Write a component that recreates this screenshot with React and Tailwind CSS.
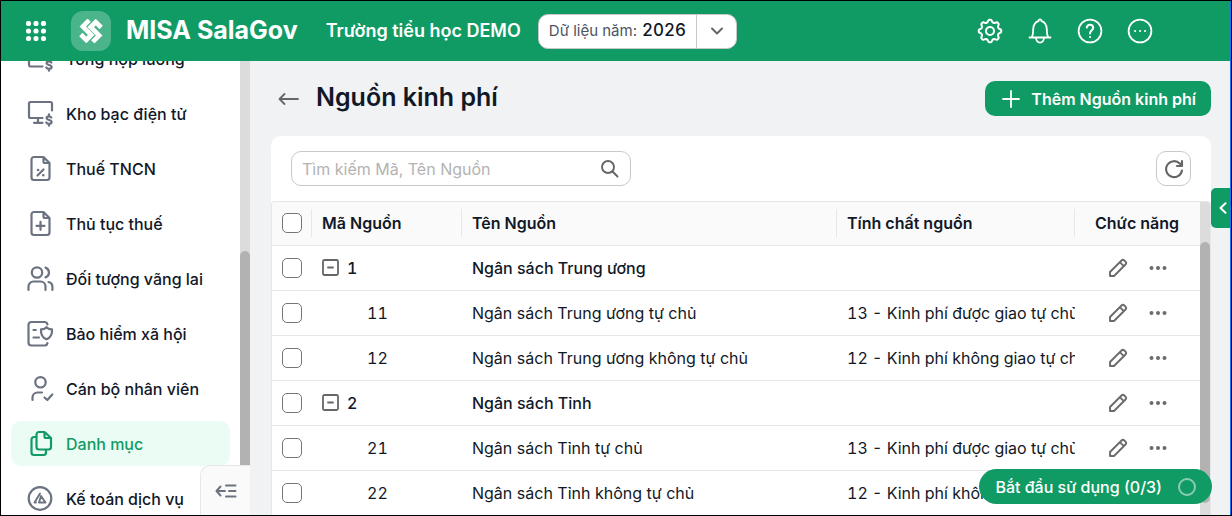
import { useState } from 'react';

const menuItems = [
  { label: 'Tổng hợp lương', icon: 'salary' },
  { label: 'Kho bạc điện tử', icon: 'monitor' },
  { label: 'Thuế TNCN', icon: 'percent' },
  { label: 'Thủ tục thuế', icon: 'plus' },
  { label: 'Đối tượng vãng lai', icon: 'users' },
  { label: 'Bảo hiểm xã hội', icon: 'insurance' },
  { label: 'Cán bộ nhân viên', icon: 'staff' },
  { label: 'Danh mục', icon: 'copy', active: true },
  { label: 'Kế toán dịch vụ', icon: 'accounting' },
];

const sources = [
  { code: '1', name: 'Ngân sách Trung ương', nature: '', parent: true },
  { code: '11', name: 'Ngân sách Trung ương tự chủ', nature: '13 - Kinh phí được giao tự chủ' },
  { code: '12', name: 'Ngân sách Trung ương không tự chủ', nature: '12 - Kinh phí không giao tự chủ' },
  { code: '2', name: 'Ngân sách Tỉnh', nature: '', parent: true },
  { code: '21', name: 'Ngân sách Tỉnh tự chủ', nature: '13 - Kinh phí được giao tự chủ' },
  { code: '22', name: 'Ngân sách Tỉnh không tự chủ', nature: '12 - Kinh phí không giao tự chủ' },
];

// 8-lobed outline of the settings gear
const gearPoints = Array.from({ length: 96 }, (_, i) => {
  const a = (i / 96) * Math.PI * 2;
  const r = 10.1 + 1.3 * Math.tanh(1.6 * Math.cos(8 * a));
  return `${(13 + r * Math.cos(a)).toFixed(2)},${(13 + r * Math.sin(a)).toFixed(2)}`;
}).join(' ');

const dollar =
  'M24.300 17.600c-.5-1-1.300-1.300-2.400-1.300-1.300 0-2.300.7-2.300 1.800 0 2.600 5 1.300 5 3.800 0 1.200-1.100 1.900-2.600 1.900-1.300 0-2.200-.4-2.700-1.400M22 14.300v2M22 23.800v1.900';

const menuPaths = {
  salary: (
    <>
      <path d="M25 10.500V5a2 2 0 0 0-2-2H4a2 2 0 0 0-2 2v14.500a2 2 0 0 0 2 2H15.500" />
      <path d={dollar} />
    </>
  ),
  monitor: (
    <>
      <path d="M25 10.500V3.500A1.500 1.500 0 0 0 23.500 2h-20A1.500 1.500 0 0 0 2 3.500v13A1.500 1.500 0 0 0 3.500 18H15.500M11 18v4M7 22.800h8.500" />
      <path d={dollar} />
    </>
  ),
  percent: (
    <>
      <path d="M16.500 2H7a2.500 2.500 0 0 0-2.500 2.500v18A2.500 2.500 0 0 0 7 25h13a2.500 2.500 0 0 0 2.500-2.500V8zM16.500 2v4.500A1.500 1.500 0 0 0 18 8h4.500M16.500 14.500l-6 6" />
      <path d="M11 15h.1M16.200 20.200h.1" strokeWidth="2.600" />
    </>
  ),
  plus: (
    <path d="M16.500 2H7a2.500 2.500 0 0 0-2.500 2.500v18A2.500 2.500 0 0 0 7 25h13a2.500 2.500 0 0 0 2.500-2.500V8zM16.500 2v4.500A1.500 1.500 0 0 0 18 8h4.500M13.500 11.800v8M9.500 15.800h8" />
  ),
  users: (
    <>
      <circle cx="10" cy="7.500" r="5.200" />
      <path d="M1.500 25v-3.500a5 5 0 0 1 5-5h7a5 5 0 0 1 5 5V25M18.500 2.600a5.200 5.200 0 0 1 0 9.800M21.500 17c2.400.6 3.900 2.400 3.900 5V25" />
    </>
  ),
  insurance: (
    <path d="M20.500 4.500A3 3 0 0 0 18 2H4.500A3 3 0 0 0 1.500 5v17.500a3 3 0 0 0 3 3H18a3 3 0 0 0 2.500-2.500M6.500 10h2.300M6.500 17.500h5.500M19.500 7.200c1.500 1.500 3.400 2.200 5.500 2.200.3 4.700-1.200 8.300-5.500 9.900-4.300-1.600-5.800-5.200-5.500-9.900 2.100 0 4-.7 5.500-2.200z" />
  ),
  staff: (
    <>
      <circle cx="13.500" cy="7.300" r="5.200" />
      <path d="M5.500 25v-2.500a5 5 0 0 1 5-5H15M17.500 22.500l2.800 2.500 5-5.500" />
    </>
  ),
  copy: (
    <>
      <path d="M17.500 2H12a2.500 2.500 0 0 0-2.500 2.500V17a2.500 2.500 0 0 0 2.500 2.500h9.500A2.500 2.500 0 0 0 24 17V8zM17.500 2v4.500A1.500 1.500 0 0 0 19 8h5" />
      <path d="M9 7H7a2.500 2.500 0 0 0-2.500 2.500v13A2.500 2.500 0 0 0 7 25h9.500a2.500 2.500 0 0 0 2.500-2.500V20" />
    </>
  ),
  accounting: (
    <>
      <circle cx="13" cy="13.500" r="11.300" />
      <path d="M7.500 17.500 13 8.500M12 17.500l2-6.500 4.500 6.500zM7.500 17.500H9" strokeWidth="1.900" />
    </>
  ),
};

const MenuIcon = ({ name }) => (
  <svg
    viewBox="0 0 27 27"
    className="size-[27px] shrink-0"
    fill="none"
    stroke="currentColor"
    strokeWidth="2.200"
    strokeLinecap="round"
    strokeLinejoin="round"
  >
    {menuPaths[name]}
  </svg>
);

const HeaderIcon = ({ label, children }) => (
  <button aria-label={label} className="text-white">
    <svg viewBox="0 0 26 26" className="size-[26px]" fill="none" stroke="currentColor" strokeWidth="1.800" strokeLinecap="round" strokeLinejoin="round">
      {children}
    </svg>
  </button>
);

const Header = () => (
  <header className="flex h-[60px] shrink-0 items-center bg-[#119b64] pl-[25px] pr-[77px] text-white">
    <button aria-label="Ứng dụng">
      <svg viewBox="0 0 20 20" className="size-5" fill="currentColor">
        {[2.5, 10, 17.5].map((y) => [2.5, 10, 17.5].map((x) => <circle key={`${x}-${y}`} cx={x} cy={y} r="2.600" />))}
      </svg>
    </button>
    <div className="ml-[25px] flex size-10 shrink-0 items-center justify-center rounded-xl bg-white/25">
      <svg viewBox="0 0 24 24" className="size-6" fill="none" stroke="white" strokeWidth="4.600">
        <path d="M10.200 1.100 3.800 7.500l8.500 8.500-5 5-5.500-5.500" />
        <path d="M13.800 22.900l6.400-6.400L11.700 8l5-5 5.500 5.500" />
      </svg>
    </div>
    <span className="ml-[15px] whitespace-nowrap text-[25px] font-bold">MISA SalaGov</span>
    <span className="ml-7 whitespace-nowrap text-lg font-semibold">Trường tiểu học DEMO</span>
    <div className="ml-[17px] flex h-[35px] shrink-0 items-center rounded-[10px] border border-[#c8c8c8] bg-white">
      <span className="flex items-center gap-[5px] whitespace-nowrap px-[10px] text-[15px] text-[#4b5563]">
        Dữ liệu năm: <b className="text-[17px] font-medium tabular-nums text-[#111827]">2026</b>
      </span>
      <button aria-label="Chọn năm" className="flex h-full w-10 items-center justify-center border-l border-[#c8c8c8] text-[#666]">
        <svg viewBox="0 0 14 8" className="h-2 w-3.5" fill="none" stroke="currentColor" strokeWidth="2" strokeLinecap="round" strokeLinejoin="round">
          <path d="M2 1.500 7 6.500l5-5" />
        </svg>
      </button>
    </div>
    <div className="ml-auto flex items-center gap-6">
      <HeaderIcon label="Thiết lập">
        <circle cx="13" cy="13" r="4" strokeWidth="2" />
        <polygon points={gearPoints} strokeWidth="2" />
      </HeaderIcon>
      <HeaderIcon label="Thông báo">
        <path d="M2.500 19.500h21M4.500 19.500c1.600-2 1.700-4.500 1.700-8.500 0-4.300 3-7.500 5.300-8 .2-1.200.8-1.700 1.500-1.700s1.300.5 1.500 1.700c2.300.5 5.300 3.700 5.300 8 0 4 .1 6.500 1.700 8.500M9 20c.3 2.800 1.800 4.600 4 4.600s3.700-1.800 4-4.600" />
      </HeaderIcon>
      <HeaderIcon label="Trợ giúp">
        <circle cx="13" cy="13" r="11.400" />
        <path d="M9.800 9.500c.3-1.800 1.500-2.700 3.200-2.700 1.900 0 3.200 1.200 3.200 2.900 0 2.500-3.200 2.700-3.200 5.800M13 19h.1" strokeWidth="2" />
      </HeaderIcon>
      <HeaderIcon label="Thêm">
        <circle cx="13" cy="13" r="11.400" />
        <path d="M8 13h.1M13 13h.1M18 13h.1" strokeWidth="2" />
      </HeaderIcon>
    </div>
  </header>
);

const Sidebar = () => (
  <aside className="relative flex w-[249px] shrink-0 overflow-hidden bg-white">
    <nav className="-mt-[25px] flex flex-1 flex-col gap-[10px] px-[10px]">
      {menuItems.map((item) => (
        <a
          key={item.label}
          href="#"
          className={`flex h-[45px] shrink-0 items-center gap-3 whitespace-nowrap rounded-[10px] pl-4 text-base font-medium ${
            item.active ? 'bg-[#ebfcf5] text-[#119b64]' : 'text-[#111827]'
          }`}
        >
          <span className={item.active ? 'text-[#119b64]' : 'text-[#6b7280]'}>
            <MenuIcon name={item.icon} />
          </span>
          {item.label}
        </a>
      ))}
    </nav>
    <div className="flex w-[10px] shrink-0 flex-col bg-[#dcdcdc] pt-[190px]">
      <div className="flex-1 rounded-t-full bg-[#b2b2b2]"></div>
    </div>
    <button aria-label="Thu gọn" className="absolute bottom-0 right-0 flex h-[50px] w-[50px] items-center justify-center rounded-tl-[10px] border-l border-t border-[#e5e7eb] bg-[#fafafa] text-[#6b7280]">
      <svg viewBox="0 0 22 16" className="h-4 w-[22px]" fill="none" stroke="currentColor" strokeWidth="2" strokeLinecap="round" strokeLinejoin="round">
        <path d="M5.500 3.500 1.500 8l4 4.500M1.500 8H10M14 8h6.500M11 2.500h9.500M11 13.500h9.500" />
      </svg>
    </button>
  </aside>
);

const Checkbox = ({ label }) => (
  <input
    type="checkbox"
    aria-label={label}
    className="block size-5 appearance-none rounded-[5px] border border-[#757575] bg-white checked:bg-[#119b64]"
  />
);

const SourceRow = ({ source, open, onToggle }) => (
  <tr className={`h-[45px] border-b border-[#e5e7eb] ${source.parent ? 'font-medium' : ''}`}>
    <td className="pl-[10px]">
      <Checkbox label={`Chọn ${source.name}`} />
    </td>
    <td className={source.parent ? 'pl-[11px]' : 'pl-14'}>
      <div className="flex items-center gap-2">
        {source.parent && (
          <button aria-label={open ? 'Thu gọn' : 'Mở rộng'} onClick={onToggle} className="text-[#666]">
            <svg viewBox="0 0 17 17" className="size-[17px]" fill="none" stroke="currentColor" strokeWidth="1.800" strokeLinecap="round">
              <rect x="1" y="1" width="15" height="15" rx="1.500" />
              <path d={open ? 'M6 8.500h5' : 'M6 8.500h5M8.500 6v5'} />
            </svg>
          </button>
        )}
        <span className="tabular-nums">{source.code}</span>
      </div>
    </td>
    <td className="truncate pl-[11px]">{source.name}</td>
    <td className="overflow-hidden whitespace-nowrap pl-[11px] tabular-nums">{source.nature}</td>
    <td>
      <div className="flex items-center gap-5 pl-[33px] text-[#6b6b6b]">
        <button aria-label="Sửa">
          <svg viewBox="0 0 20 20" className="size-5" fill="none" stroke="currentColor" strokeWidth="1.900" strokeLinejoin="round">
            <path d="M2 18v-4L13.500 2.500a2 2 0 0 1 2.800 0l1.200 1.200a2 2 0 0 1 0 2.800L6 18zM11.800 4.200l4 4" />
          </svg>
        </button>
        <button aria-label="Thao tác khác">
          <svg viewBox="0 0 20 20" className="size-5" fill="currentColor">
            <circle cx="3.500" cy="10" r="2" />
            <circle cx="10" cy="10" r="2" />
            <circle cx="16.500" cy="10" r="2" />
          </svg>
        </button>
      </div>
    </td>
  </tr>
);

const SourceTable = () => {
  const [collapsed, setCollapsed] = useState([]);

  const toggle = (code) =>
    setCollapsed((prev) => (prev.includes(code) ? prev.filter((c) => c !== code) : [...prev, code]));

  const visible = sources.filter((s) => s.parent || !collapsed.includes(s.code[0]));

  return (
    <div className="flex min-h-0 flex-1 overflow-hidden rounded-t-[4px] border-x border-t border-[#e5e7eb]">
      <div className="min-w-0 flex-1 overflow-hidden">
        <table className="w-full table-fixed text-left text-base text-[#111827]">
          <thead className="bg-[#fafafa]">
            <tr className="h-[43px] border-b border-[#e5e7eb]">
              <th className="w-[39px] pl-[10px]">
                <Checkbox label="Chọn tất cả" />
              </th>
              <th className="w-[150px] font-semibold">
                <div className="flex h-7 items-center border-l border-[#e5e7eb] pl-[10px]">Mã Nguồn</div>
              </th>
              <th className="font-semibold">
                <div className="flex h-7 items-center border-l border-[#e5e7eb] pl-[10px]">Tên Nguồn</div>
              </th>
              <th className="w-[239px] font-semibold">
                <div className="flex h-7 items-center border-x border-[#e5e7eb] pl-[10px]">Tính chất nguồn</div>
              </th>
              <th className="w-[125px] pl-5 font-semibold">Chức năng</th>
            </tr>
          </thead>
          <tbody>
            {visible.map((source) => (
              <SourceRow
                key={source.code}
                source={source}
                open={!collapsed.includes(source.code)}
                onToggle={() => toggle(source.code)}
              />
            ))}
          </tbody>
        </table>
      </div>
      <div className="flex w-[10px] shrink-0 flex-col bg-[#dcdcdc] pb-3 pt-10">
        <div className="flex-1 rounded-full bg-[#b2b2b2]"></div>
      </div>
    </div>
  );
};

const App = () => {
  return (
    <div className="h-screen border border-black bg-[#f0f2f4] font-['Inter',sans-serif]">
      <div className="flex h-full flex-col overflow-hidden border-r border-[#1a73e8]">
        <Header />
        <div className="flex min-h-0 flex-1">
          <Sidebar />
          <main className="relative flex min-w-0 flex-1 flex-col pl-[21px] pr-[19px]">
            <div className="flex h-[75px] shrink-0 items-center">
              <button aria-label="Quay lại" className="ml-[7px] text-[#666]">
                <svg viewBox="0 0 22 14" className="h-3.5 w-[22px]" fill="none" stroke="currentColor" strokeWidth="1.800" strokeLinecap="round" strokeLinejoin="round">
                  <path d="M6.500 2 1.500 7l5 5M1.500 7H20" />
                </svg>
              </button>
              <h1 className="ml-4 whitespace-nowrap pb-0.5 text-[25px] font-semibold text-[#111827]">Nguồn kinh phí</h1>
              <button className="ml-auto flex h-[35px] items-center gap-[11px] whitespace-nowrap rounded-[10px] bg-[#119b64] pl-[17px] pr-[15px] text-base font-semibold text-white">
                <svg viewBox="0 0 18 18" className="size-[18px]" fill="none" stroke="currentColor" strokeWidth="1.800" strokeLinecap="round">
                  <path d="M9 1v16M1 9h16" />
                </svg>
                Thêm Nguồn kinh phí
              </button>
            </div>

            <section className="flex min-h-0 flex-1 flex-col rounded-t-[10px] bg-white">
              <div className="flex h-[65px] shrink-0 items-center justify-between px-5">
                <label className="flex h-[35px] w-[340px] items-center rounded-[10px] border border-[#c8c8c8] px-[10px]">
                  <input
                    type="text"
                    aria-label="Tìm kiếm"
                    placeholder="Tìm kiếm Mã, Tên Nguồn"
                    className="min-w-0 flex-1 text-base text-[#111827] placeholder:text-[#b3b3b3] focus:outline-none"
                  />
                  <svg viewBox="0 0 20 20" className="size-5 text-[#666]" fill="none" stroke="currentColor" strokeWidth="1.900" strokeLinecap="round">
                    <circle cx="8" cy="8" r="6" />
                    <path d="M12.500 12.500 17.500 17.500" />
                  </svg>
                </label>
                <button aria-label="Tải lại" className="flex size-[35px] items-center justify-center rounded-[10px] border border-[#c8c8c8] text-[#666]">
                  <svg viewBox="0 0 20 20" className="size-5" fill="none" stroke="currentColor" strokeWidth="2.100" strokeLinecap="round" strokeLinejoin="round">
                    <path d="M18 11.500A8 8 0 1 1 15.800 4.500L17.500 6.500M18 2v5h-5" />
                  </svg>
                </button>
              </div>
              <SourceTable />
            </section>

            <button aria-label="Mở bảng bên" className="absolute right-0 top-[127px] flex h-10 w-[19px] items-center justify-center rounded-l-[5px] bg-[#119b64] text-white">
              <svg viewBox="0 0 8 12" className="ml-1 h-3 w-2" fill="none" stroke="currentColor" strokeWidth="2" strokeLinecap="round" strokeLinejoin="round">
                <path d="M6.500 1.200 1.500 6l5 4.800" />
              </svg>
            </button>

            <button className="absolute bottom-[11px] right-[18px] flex h-[35px] items-center gap-4 whitespace-nowrap rounded-full bg-[#119b64] px-4 text-base font-medium text-white">
              Bắt đầu sử dụng (0/3)
              <span className="size-[18px] rounded-full border-2 border-white/50"></span>
            </button>
          </main>
        </div>
      </div>
    </div>
  );
};

export default App;
